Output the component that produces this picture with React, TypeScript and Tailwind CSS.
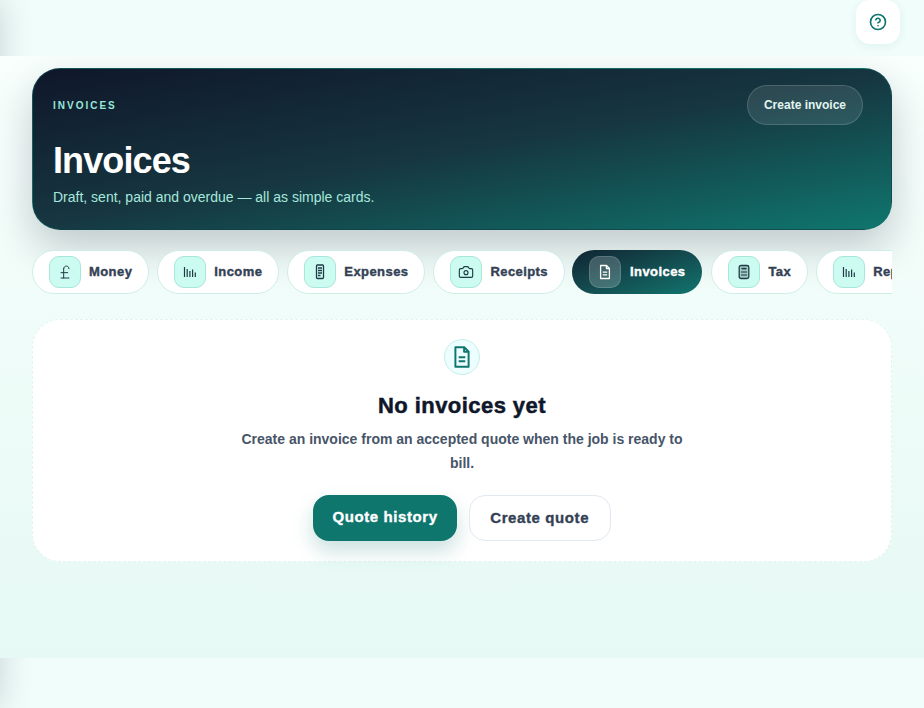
import { Camera, CircleHelp, PoundSterling } from "lucide-react";

function Bars() {
  return (
    <svg width="16" height="16" viewBox="0 0 16 16" fill="none" stroke="currentColor" strokeWidth="1.2">
      <path d="M2.5 3v10M5.2 5v8M7.9 7v6M10.6 5.5v7.5M13.3 8.5v4.5" />
    </svg>
  );
}
function Phone() {
  return (
    <svg width="16" height="16" viewBox="0 0 16 16" fill="none" stroke="currentColor" strokeWidth="1.3">
      <rect x="4.5" y="1" width="7" height="13.5" rx="1" />
      <path d="M6 4h4M6 6.5h4M6 9h4M6 11.5h2.5" />
    </svg>
  );
}
function Doc({ size = 16, sw = 1.3 }: { size?: number; sw?: number }) {
  return (
    <svg width={size} height={size} viewBox="0 0 16 16" fill="none" stroke="currentColor" strokeWidth={sw} strokeLinejoin="round">
      <path d="M3.6 1.5h5.9l2.9 2.9v10.1H3.6z" />
      <path d="M9.4 1.5v3h3M5.8 8.2h4.4M5.8 10.8h4.4" />
    </svg>
  );
}
function Calc() {
  return (
    <svg width="16" height="16" viewBox="0 0 16 16" fill="none" stroke="currentColor" strokeWidth="1.3">
      <rect x="3.2" y="1.5" width="9.6" height="13" rx="1.8" fill="currentColor" fillOpacity="0.25" />
      <path d="M5.5 4.6h5" strokeWidth="1.6" />
      <path d="M5.3 8h5.4M5.3 11h5.4" strokeWidth="1.6" strokeDasharray="1.4 0.6" />
    </svg>
  );
}

const tabs = [
  { label: "Money", icon: <PoundSterling size={16} strokeWidth={1.5} /> },
  { label: "Income", icon: <Bars /> },
  { label: "Expenses", icon: <Phone /> },
  { label: "Receipts", icon: <Camera size={16} strokeWidth={1.7} /> },
  { label: "Invoices", icon: <Doc />, active: true },
  { label: "Tax", icon: <Calc /> },
  { label: "Reports", icon: <Bars /> },
];

export default function App() {
  return (
    <div className="relative h-[708px] overflow-hidden bg-[#f0fdfa] font-['Liberation_Sans',sans-serif]">
      <div className="absolute top-0 bottom-0 left-[-300px] w-[300px] bg-white shadow-[0_0_32px_rgba(15,23,42,0.18)]" />
      <header className="relative flex h-14 justify-end pr-6">
        <button className="flex h-11 w-11 items-center justify-center rounded-[14px] bg-white text-[#0f766e] shadow-[0_2px_8px_rgba(15,118,110,0.08)]">
          <CircleHelp size={18} strokeWidth={2.2} />
        </button>
      </header>
      <main className="relative h-[602px] overflow-hidden bg-gradient-to-b from-[#f8fffd] to-[#e6f9f4] px-8 pt-3">
        <section className="flex h-[162px] flex-col rounded-[28px] border border-[#0f766e]/40 bg-[linear-gradient(170deg,#0f172a_0%,#163640_50%,#0f766e_100%)] px-5 pt-4 text-white shadow-[0_18px_40px_rgba(15,23,42,0.22)]">
          <div className="flex items-center justify-between">
            <span className="pt-[1px] text-[10px] font-bold tracking-[0.2em] text-[#99e6da]">INVOICES</span>
            <button className="mr-2 h-10 rounded-full border border-white/15 bg-white/10 px-4 text-xs font-bold text-[#e2f5f2]">Create invoice</button>
          </div>
          <h1 className="mt-4 text-[36px] leading-10 font-bold tracking-tight">Invoices</h1>
          <p className="mt-[6px] text-sm text-[#a7e8dd]">Draft, sent, paid and overdue — all as simple cards.</p>
        </section>

        <nav className="mt-5 flex gap-2 overflow-hidden">
          {tabs.map((t) =>
            t.active ? (
              <div key={t.label} className="-ml-[1px] mr-[1px] flex h-11 shrink-0 items-center gap-[9px] rounded-full bg-gradient-to-br from-[#0f2533] to-[#0f766e] pr-[17px] pl-[17px] text-white">
                <span className="flex h-8 w-8 items-center justify-center rounded-[10px] border border-white/15 bg-white/20">{t.icon}</span>
                <span className="text-[13px] font-black tracking-[0.0325em] [-webkit-text-stroke:0.4px_currentColor]">{t.label}</span>
              </div>
            ) : (
              <div key={t.label} className="flex h-11 shrink-0 items-center gap-2 rounded-full border border-[#cfeee8] bg-white pr-4 pl-4 text-[#334155]">
                <span className="flex h-8 w-8 items-center justify-center rounded-[10px] border border-[#a8e6da] bg-[#ccfbf1] text-[#1f3b45]">{t.icon}</span>
                <span className="text-[13px] font-black tracking-[0.0325em] [-webkit-text-stroke:0.4px_currentColor]">{t.label}</span>
              </div>
            ),
          )}
        </nav>

        <section className="mt-[25px] flex h-[243px] flex-col items-center rounded-[28px] border border-dashed border-[#e0f5f0] bg-white pt-[19px]">
          <span className="flex h-9 w-9 items-center justify-center rounded-full border border-[#c6eee8] bg-[#ecfeff] text-[#0f766e]">
            <Doc size={24} sw={1.3} />
          </span>
          <h2 className="mt-[17px] text-[22px] leading-7 font-black tracking-[0.02em] text-[#0f172a] [-webkit-text-stroke:0.5px_currentColor]">No invoices yet</h2>
          <p className="mt-[7px] max-w-[460px] text-center text-sm leading-6 font-semibold text-[#475569]">
            Create an invoice from an accepted quote when the job is ready to bill.
          </p>
          <div className="mt-5 flex gap-3">
            <button className="h-[46px] rounded-2xl bg-[#0f766e] px-[19px] pb-[2px] text-[15px] tracking-[0.04em] font-black text-white shadow-[0_10px_20px_rgba(15,118,110,0.22)] [-webkit-text-stroke:0.35px_currentColor]">Quote history</button>
            <button className="h-[46px] rounded-2xl border border-[#e2e8f0] bg-white px-[20.5px] text-[15px] tracking-[0.04em] font-black text-[#334155] [-webkit-text-stroke:0.35px_currentColor]">Create quote</button>
          </div>
        </section>
      </main>
    </div>
  );
}
